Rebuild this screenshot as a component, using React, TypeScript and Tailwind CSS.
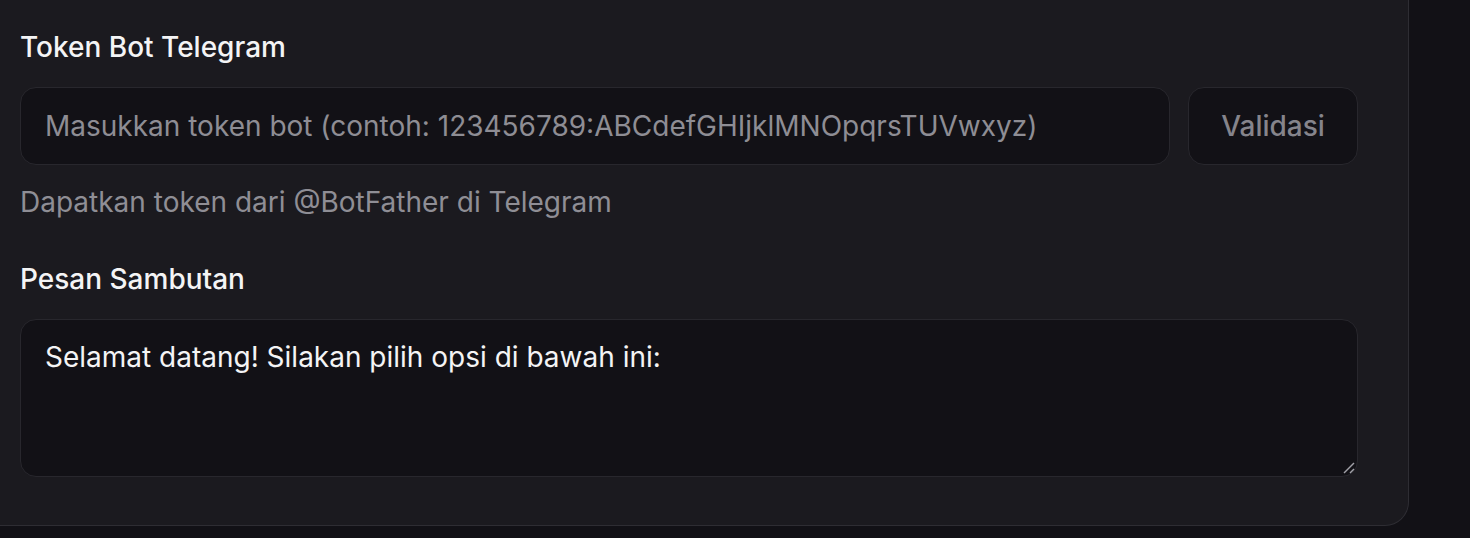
import { useState } from "react";

const App = () => {
  const [token, setToken] = useState("");
  const [greeting, setGreeting] = useState("Selamat datang! Silakan pilih opsi di bawah ini:");

  return (
    <div
      className="min-h-screen bg-[#121116] pr-[61px] text-[#f4f4f5]"
      style={{ fontFamily: "Inter, 'Noto Sans', sans-serif" }}
    >
      <div className="rounded-br-[24px] border-r border-b border-[#2e2d33] bg-[#1b1a1f] pt-[27px] pr-[50px] pb-[48px] pl-[20px]">
        {/* Token */}
        <label className="block text-[28px] leading-[40px] font-medium text-[#f4f4f5]">
          Token Bot Telegram
        </label>
        <div className="mt-[20px] flex gap-[18px]">
          <input
            value={token}
            onChange={(e) => setToken(e.target.value)}
            placeholder="Masukkan token bot (contoh: 123456789:ABCdefGHIjklMNOpqrsTUVwxyz)"
            className="h-[78px] flex-1 rounded-[16px] border border-[#28272d] bg-[#121116] px-[24px] text-[28px] text-[#f4f4f5] outline-none placeholder:text-[#8e8d94]"
          />
          <button
            disabled={!token}
            className="h-[78px] w-[170px] rounded-[16px] border border-[#28272d] bg-[#121116] text-[28px] font-medium text-[#85848b]"
          >
            Validasi
          </button>
        </div>
        <p className="mt-[17px] text-[28px] leading-[40px] text-[#8f8e95]">
          Dapatkan token dari @BotFather di Telegram
        </p>

        {/* Greeting */}
        <label className="mt-[37px] block text-[28px] leading-[40px] font-medium text-[#f4f4f5]">
          Pesan Sambutan
        </label>
        <div className="relative mt-[20px]">
          <textarea
            value={greeting}
            onChange={(e) => setGreeting(e.target.value)}
            className="block h-[158px] w-full resize-none rounded-[16px] border border-[#28272d] bg-[#121116] px-[24px] py-[17px] text-[28px] leading-[40px] text-[#f4f4f5] outline-none"
          />
          {/* resize grip */}
          <svg
            className="pointer-events-none absolute right-[2px] bottom-[2px]"
            width="14"
            height="14"
            viewBox="0 0 14 14"
          >
            <path d="M2 12 L12 2" stroke="#a1a1a8" strokeWidth="1.4" />
            <path d="M8 12 L12 8" stroke="#a1a1a8" strokeWidth="1.4" />
          </svg>
        </div>
      </div>
    </div>
  );
};

export default App;
